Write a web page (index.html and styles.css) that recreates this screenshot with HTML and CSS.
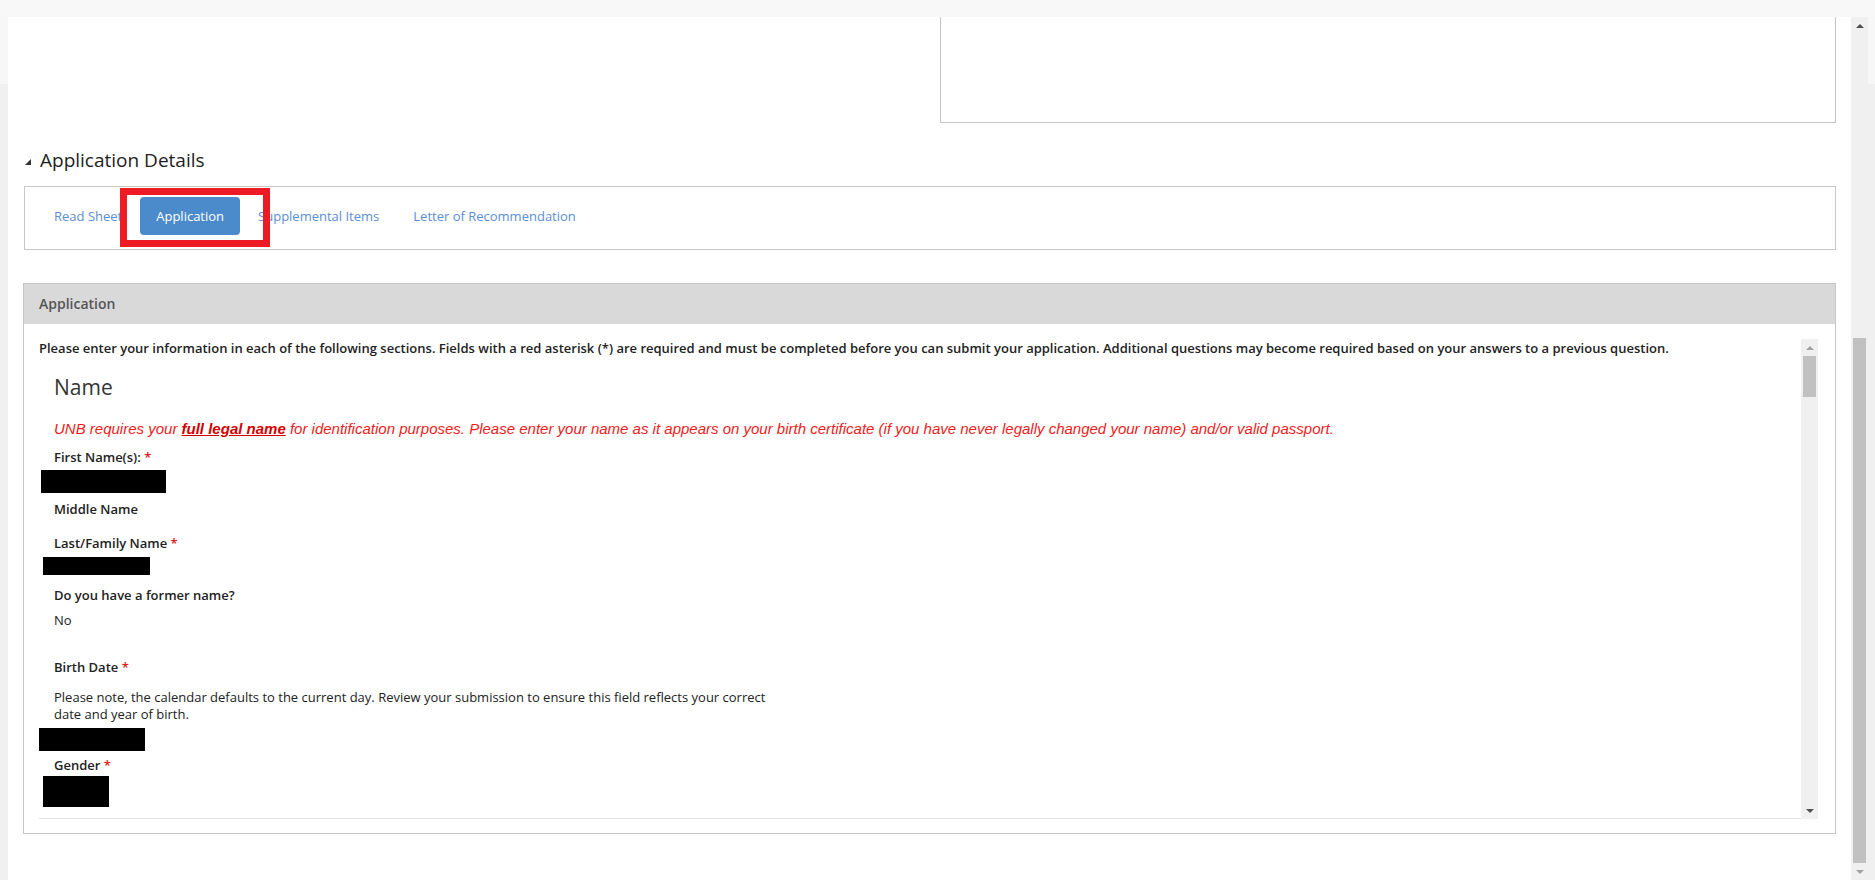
FILE: index.html
```html
<!DOCTYPE html>
<html lang="en">
<head>
    <meta charset="UTF-8">
    <meta name="viewport" content="width=device-width, initial-scale=1.0">
    <title>Application Details</title>
    <link rel="stylesheet" href="styles.css">
</head>
<body>
    <!-- Top band -->
    <div class="topbar"></div>

    <div class="window">
        <div class="edge"></div>

        <main class="page">
            <!-- Box left over from the section above -->
            <div class="summary-box"></div>

            <h2 class="section-title">
                <svg class="caret" width="6" height="6" viewBox="0 0 6 6"><polygon points="6,0 6,6 0,6" fill="#333"/></svg>
                Application Details
            </h2>

            <!-- Tabs -->
            <div class="tab-box">
                <nav class="tabs">
                    <a class="tab">Read Sheet</a>
                    <a class="tab active">Application</a>
                    <a class="tab">Supplemental Items</a>
                    <a class="tab">Letter of Recommendation</a>
                </nav>
                <div class="highlight"></div>
            </div>

            <!-- Application panel -->
            <div class="panel">
                <div class="panel-heading">Application</div>
                <div class="panel-body">
                    <div class="scroll-area">
                        <div class="scroll-content">
                            <p class="intro">Please enter your information in each of the following sections. Fields with a red asterisk (*) are required and must be completed before you can submit your application. Additional questions may become required based on your answers to a previous question.</p>

                            <div class="form-section">
                                <h3>Name</h3>
                                <p class="notice">UNB requires your <b><u>full legal name</u></b> for identification purposes. Please enter your name as it appears on your birth certificate (if you have never legally changed your name) and/or valid passport.</p>

                                <label class="field-label first">First Name(s): <span class="req">*</span></label>
                                <div class="redact redact-first"></div>

                                <label class="field-label middle">Middle Name</label>

                                <label class="field-label last">Last/Family Name <span class="req">*</span></label>
                                <div class="redact redact-last"></div>

                                <label class="field-label former">Do you have a former name?</label>
                                <div class="field-value">No</div>

                                <label class="field-label birth">Birth Date <span class="req">*</span></label>
                                <p class="help">Please note, the calendar defaults to the current day. Review your submission to ensure this field reflects your correct date and year of birth.</p>
                                <div class="redact redact-birth"></div>

                                <label class="field-label gender">Gender <span class="req">*</span></label>
                                <div class="redact redact-gender"></div>
                            </div>
                        </div>

                        <div class="scrollbar inner">
                            <div class="sb-btn"><span class="arrow up light"></span></div>
                            <div class="sb-track"><div class="sb-thumb"></div></div>
                            <div class="sb-btn"><span class="arrow down"></span></div>
                        </div>
                    </div>
                </div>
            </div>
        </main>

        <!-- Page scrollbar -->
        <div class="scrollbar page-scroll">
            <div class="sb-btn"><span class="arrow up"></span></div>
            <div class="sb-track"><div class="sb-thumb"></div></div>
            <div class="sb-btn"><span class="arrow down light"></span></div>
        </div>

        <div class="edge right"></div>
    </div>
</body>
</html>
```

FILE: styles.css
```css
/* General reset */
* {
    margin: 0;
    padding: 0;
    box-sizing: border-box;
}

body {
    font-family: 'Open Sans', sans-serif;
    color: #222;
    background-color: #f0f0f0;
    height: 880px;
    overflow: hidden;
}

/* Grey band on top */
.topbar {
    height: 17px;
    background-color: #f8f8f8;
}

.window {
    display: flex;
    height: 863px;
}

.edge {
    width: 8px;
    background: linear-gradient(#f7f7f7 0, #f7f7f7 67px, #f0f0f0 67px);
}

.edge.right {
    width: 7px;
}

/* Main white page */
.page {
    flex: 1;
    background-color: white;
    padding-right: 15px;
}

.summary-box {
    margin-left: 932px;
    height: 106px;
    border: 1px solid #c4c4c4;
    border-top: none;
}

/* Section title */
.section-title {
    margin: 24px 0 0 17px;
    font-size: 19px;
    font-weight: 400;
    line-height: 26px;
    color: #222;
    display: flex;
    align-items: center;
}

.caret {
    margin: 3px 9px 0 0;
}

/* Tabs */
.tab-box {
    position: relative;
    margin: 13px 0 0 16px;
    border: 1px solid #c8c8c8;
    padding: 10px 0 14px 13px;
}

.tabs {
    display: flex;
}

.tab {
    padding: 0 16px;
    margin-right: 2px;
    height: 38px;
    line-height: 39px;
    font-size: 13px;
    color: #5b8ed6;
    border-radius: 4px;
    cursor: pointer;
}

.tab.active {
    background-color: #4c8bcb;
    color: white;
}

/* Red annotation box round the active tab */
.highlight {
    position: absolute;
    left: 95px;
    top: 1px;
    width: 150px;
    height: 59px;
    border: 7px solid #ed1c24;
}

/* Panel */
.panel {
    margin: 33px 0 0 15px;
    border: 1px solid #c6c6c6;
}

.panel-heading {
    height: 40px;
    line-height: 40px;
    padding-left: 15px;
    background-color: #d9d9d9;
    font-size: 14px;
    font-weight: 600;
    color: #555;
}

.panel-body {
    padding: 15px 17px 14px 15px;
}

.scroll-area {
    display: flex;
    height: 480px;
}

.scroll-content {
    flex: 1;
    overflow: hidden;
    border-bottom: 1px solid #e5e5e5;
}

.intro {
    font-size: 13px;
    font-weight: 600;
    line-height: 18px;
}

.form-section {
    padding-left: 15px;
}

.form-section h3 {
    margin-top: 16px;
    font-size: 21px;
    font-weight: 400;
    line-height: 28px;
    color: #333;
}

.notice {
    margin-top: 19px;
    font-family: 'Liberation Sans', Arial, sans-serif;
    font-style: italic;
    font-size: 15px;
    line-height: 18px;
    color: #ee1c1c;
}

.notice b {
    color: #d40000;
}

.field-label {
    display: block;
    font-size: 13px;
    font-weight: 600;
    line-height: 18px;
}

.req {
    color: #e02020;
}

.field-label.first { margin-top: 10px; }
.field-label.middle { margin-top: 7px; }
.field-label.last { margin-top: 16px; }
.field-label.former { margin-top: 11px; }
.field-label.birth { margin-top: 29px; }
.field-label.gender { margin-top: 5px; }

.field-value {
    margin-top: 7px;
    font-size: 13px;
    line-height: 18px;
}

.help {
    margin-top: 13px;
    max-width: 725px;
    font-size: 13px;
    line-height: 17px;
}

/* Blacked out answers */
.redact {
    background-color: black;
}

.redact-first { margin: 4px 0 0 -13px; width: 125px; height: 23px; }
.redact-last { margin: 5px 0 0 -11px; width: 107px; height: 18px; }
.redact-birth { margin: 5px 0 0 -16px; width: 107px; height: 23px; }
.redact-gender { margin: 2px 0 0 -11px; width: 66px; height: 31px; }

/* Scrollbars */
.scrollbar {
    width: 17px;
    display: flex;
    flex-direction: column;
    background-color: #f0f0f0;
}

.sb-btn {
    height: 17px;
    display: flex;
    align-items: center;
    justify-content: center;
}

.sb-track {
    flex: 1;
}

.sb-thumb {
    margin-left: 2px;
    width: 13px;
    background-color: #c1c1c1;
}

.inner .sb-thumb {
    height: 41px;
}

.page-scroll .sb-thumb {
    margin-top: 304px;
    height: 525px;
}

.arrow {
    width: 0;
    height: 0;
    border-left: 4px solid transparent;
    border-right: 4px solid transparent;
}

.arrow.up {
    border-bottom: 4px solid #505050;
}

.arrow.down {
    border-top: 4px solid #505050;
}

.arrow.up.light {
    border-bottom-color: #a3a3a3;
}

.arrow.down.light {
    border-top-color: #a3a3a3;
}
```
